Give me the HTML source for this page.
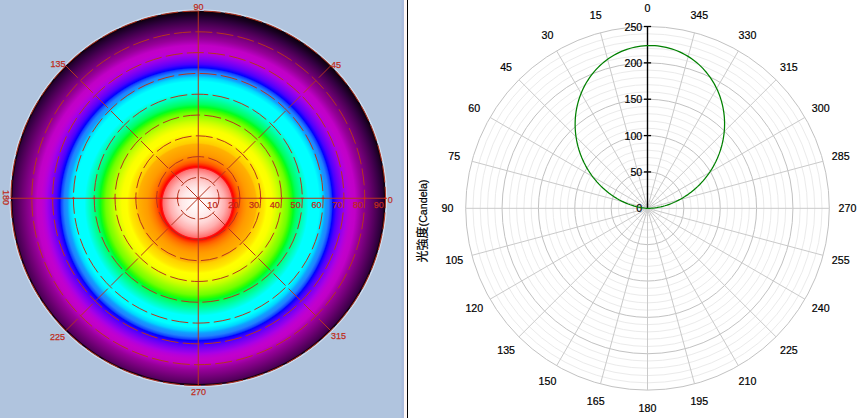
<!DOCTYPE html><html><head><meta charset="utf-8"><title>光強度</title><style>
html,body{margin:0;padding:0;background:#fff}
body{width:866px;height:418px;overflow:hidden}
svg{display:block}
text{font-family:"Liberation Sans","Noto Sans CJK TC",sans-serif}
.l{font-size:9.6px;fill:#bf2c1c;stroke:#bf2c1c;stroke-width:0.25px}
.r{font-size:10.67px;fill:#000;text-anchor:middle;stroke:#000;stroke-width:0.2px}
.s{font-size:10.67px;fill:#000;text-anchor:end;stroke:#000;stroke-width:0.2px}
</style></head><body>
<svg width="866" height="418" viewBox="0 0 866 418">
<defs>
<radialGradient id="g" gradientUnits="userSpaceOnUse" cx="195.8" cy="204.8" fx="197.6" fy="202.8" r="200.0">
<stop offset="0.0000" stop-color="rgb(255,255,255)"/>
<stop offset="0.0400" stop-color="rgb(255,245,245)"/>
<stop offset="0.0750" stop-color="rgb(255,233,233)"/>
<stop offset="0.1050" stop-color="rgb(255,210,210)"/>
<stop offset="0.1380" stop-color="rgb(255,174,174)"/>
<stop offset="0.1600" stop-color="rgb(255,134,134)"/>
<stop offset="0.1720" stop-color="rgb(255,108,108)"/>
<stop offset="0.1760" stop-color="rgb(255,24,24)"/>
<stop offset="0.1825" stop-color="rgb(255,0,0)"/>
<stop offset="0.1910" stop-color="rgb(255,40,0)"/>
<stop offset="0.2040" stop-color="rgb(255,88,0)"/>
<stop offset="0.2200" stop-color="rgb(255,120,0)"/>
<stop offset="0.2350" stop-color="rgb(255,140,0)"/>
<stop offset="0.2500" stop-color="rgb(255,155,0)"/>
<stop offset="0.2950" stop-color="rgb(255,178,0)"/>
<stop offset="0.3025" stop-color="rgb(255,205,0)"/>
<stop offset="0.3350" stop-color="rgb(255,232,0)"/>
<stop offset="0.3500" stop-color="rgb(255,255,0)"/>
<stop offset="0.3750" stop-color="rgb(250,255,0)"/>
<stop offset="0.3950" stop-color="rgb(224,255,0)"/>
<stop offset="0.4100" stop-color="rgb(200,255,0)"/>
<stop offset="0.4350" stop-color="rgb(150,255,0)"/>
<stop offset="0.4550" stop-color="rgb(112,255,0)"/>
<stop offset="0.4700" stop-color="rgb(56,255,0)"/>
<stop offset="0.4835" stop-color="rgb(0,255,32)"/>
<stop offset="0.4980" stop-color="rgb(0,255,96)"/>
<stop offset="0.5170" stop-color="rgb(0,255,144)"/>
<stop offset="0.5350" stop-color="rgb(0,255,190)"/>
<stop offset="0.5515" stop-color="rgb(0,255,230)"/>
<stop offset="0.5600" stop-color="rgb(0,255,255)"/>
<stop offset="0.6125" stop-color="rgb(0,255,255)"/>
<stop offset="0.6325" stop-color="rgb(0,216,255)"/>
<stop offset="0.6450" stop-color="rgb(16,160,255)"/>
<stop offset="0.6615" stop-color="rgb(32,128,255)"/>
<stop offset="0.6760" stop-color="rgb(16,64,255)"/>
<stop offset="0.6825" stop-color="rgb(0,0,255)"/>
<stop offset="0.7000" stop-color="rgb(72,0,255)"/>
<stop offset="0.7135" stop-color="rgb(104,0,248)"/>
<stop offset="0.7300" stop-color="rgb(136,0,240)"/>
<stop offset="0.7480" stop-color="rgb(168,0,230)"/>
<stop offset="0.7600" stop-color="rgb(184,0,215)"/>
<stop offset="0.7750" stop-color="rgb(194,0,204)"/>
<stop offset="0.7950" stop-color="rgb(192,0,198)"/>
<stop offset="0.8100" stop-color="rgb(172,0,178)"/>
<stop offset="0.8280" stop-color="rgb(150,0,152)"/>
<stop offset="0.8500" stop-color="rgb(128,0,132)"/>
<stop offset="0.8715" stop-color="rgb(106,0,112)"/>
<stop offset="0.9000" stop-color="rgb(76,0,86)"/>
<stop offset="0.9235" stop-color="rgb(50,0,64)"/>
<stop offset="0.9500" stop-color="rgb(24,0,32)"/>
<stop offset="0.9750" stop-color="rgb(6,0,10)"/>
</radialGradient>
</defs>
<rect x="0" y="0" width="404" height="418" fill="#b0c4de"/>
<rect x="401.5" y="0" width="2.5" height="418" fill="#a9badb"/>
<rect x="404" y="0" width="3" height="418" fill="#fff7f6"/>
<rect x="407" y="0" width="1" height="418" fill="#000"/>
<circle cx="198.25" cy="198.25" r="187.25" fill="url(#g)"/>
<circle cx="198.25" cy="198.25" r="188.55" fill="none" stroke="#d6e2f0" stroke-width="1"/>
<circle cx="198.25" cy="198.25" r="186.55" fill="none" stroke="#14000c" stroke-width="1.4"/>
<circle cx="198.25" cy="198.25" r="20.81" fill="none" stroke="#b5341f" stroke-width="1" stroke-dasharray="17 4.3" stroke-dashoffset="7"/>
<circle cx="198.25" cy="198.25" r="41.61" fill="none" stroke="#b5341f" stroke-width="1" stroke-dasharray="17 4.3" stroke-dashoffset="7"/>
<circle cx="198.25" cy="198.25" r="62.42" fill="none" stroke="#b5341f" stroke-width="1" stroke-dasharray="17 4.3" stroke-dashoffset="7"/>
<circle cx="198.25" cy="198.25" r="83.22" fill="none" stroke="#b5341f" stroke-width="1" stroke-dasharray="17 4.3" stroke-dashoffset="7"/>
<circle cx="198.25" cy="198.25" r="104.03" fill="none" stroke="#b5341f" stroke-width="1" stroke-dasharray="17 4.3" stroke-dashoffset="7"/>
<circle cx="198.25" cy="198.25" r="124.83" fill="none" stroke="#b5341f" stroke-width="1" stroke-dasharray="17 4.3" stroke-dashoffset="7"/>
<circle cx="198.25" cy="198.25" r="145.64" fill="none" stroke="#b5341f" stroke-width="1" stroke-dasharray="17 4.3" stroke-dashoffset="7"/>
<circle cx="198.25" cy="198.25" r="166.44" fill="none" stroke="#b5341f" stroke-width="1" stroke-dasharray="17 4.3" stroke-dashoffset="7"/>
<circle cx="198.25" cy="198.25" r="187.25" fill="none" stroke="#b5341f" stroke-width="1" stroke-dasharray="17 4.3" stroke-dashoffset="7"/>
<line x1="198.25" y1="198.25" x2="385.50" y2="198.25" stroke="#b5341f" stroke-width="1"/>
<line x1="198.25" y1="198.25" x2="330.66" y2="65.84" stroke="#b5341f" stroke-width="1" stroke-dasharray="17 4.3"/>
<line x1="198.25" y1="198.25" x2="198.25" y2="11.00" stroke="#b5341f" stroke-width="1"/>
<line x1="198.25" y1="198.25" x2="65.84" y2="65.84" stroke="#b5341f" stroke-width="1" stroke-dasharray="17 4.3"/>
<line x1="198.25" y1="198.25" x2="11.00" y2="198.25" stroke="#b5341f" stroke-width="1"/>
<line x1="198.25" y1="198.25" x2="65.84" y2="330.66" stroke="#b5341f" stroke-width="1" stroke-dasharray="17 4.3"/>
<line x1="198.25" y1="198.25" x2="198.25" y2="385.50" stroke="#b5341f" stroke-width="1"/>
<line x1="198.25" y1="198.25" x2="330.66" y2="330.66" stroke="#b5341f" stroke-width="1" stroke-dasharray="17 4.3"/>
<rect x="9.50" y="197.75" width="3" height="1" fill="#e01818"/>
<rect x="30.31" y="197.75" width="3" height="1" fill="#e01818"/>
<rect x="51.11" y="197.75" width="3" height="1" fill="#e01818"/>
<rect x="71.92" y="197.75" width="3" height="1" fill="#e01818"/>
<rect x="92.72" y="197.75" width="3" height="1" fill="#e01818"/>
<rect x="113.53" y="197.75" width="3" height="1" fill="#e01818"/>
<rect x="134.33" y="197.75" width="3" height="1" fill="#e01818"/>
<rect x="155.14" y="197.75" width="3" height="1" fill="#e01818"/>
<rect x="175.94" y="197.75" width="3" height="1" fill="#e01818"/>
<rect x="196.75" y="197.75" width="3" height="1" fill="#e01818"/>
<rect x="217.56" y="197.75" width="3" height="1" fill="#e01818"/>
<rect x="238.36" y="197.75" width="3" height="1" fill="#e01818"/>
<rect x="259.17" y="197.75" width="3" height="1" fill="#e01818"/>
<rect x="279.97" y="197.75" width="3" height="1" fill="#e01818"/>
<rect x="300.78" y="197.75" width="3" height="1" fill="#e01818"/>
<rect x="321.58" y="197.75" width="3" height="1" fill="#e01818"/>
<rect x="342.39" y="197.75" width="3" height="1" fill="#e01818"/>
<rect x="363.19" y="197.75" width="3" height="1" fill="#e01818"/>
<rect x="384.00" y="197.75" width="3" height="1" fill="#e01818"/>
<text class="l" x="207.36" y="207.7" textLength="10.1" lengthAdjust="spacingAndGlyphs">10</text>
<text class="l" x="228.16" y="207.7" textLength="10.1" lengthAdjust="spacingAndGlyphs">20</text>
<text class="l" x="248.97" y="207.7" textLength="10.1" lengthAdjust="spacingAndGlyphs">30</text>
<text class="l" x="269.77" y="207.7" textLength="10.1" lengthAdjust="spacingAndGlyphs">40</text>
<text class="l" x="290.58" y="207.7" textLength="10.1" lengthAdjust="spacingAndGlyphs">50</text>
<text class="l" x="311.38" y="207.7" textLength="10.1" lengthAdjust="spacingAndGlyphs">60</text>
<text class="l" x="332.19" y="207.7" textLength="10.1" lengthAdjust="spacingAndGlyphs">70</text>
<text class="l" x="352.99" y="207.7" textLength="10.1" lengthAdjust="spacingAndGlyphs">80</text>
<text class="l" x="373.80" y="207.7" textLength="10.1" lengthAdjust="spacingAndGlyphs">90</text>
<text class="l" x="193.45" y="10.2" textLength="10.1" lengthAdjust="spacingAndGlyphs">90</text>
<text class="l" x="330.90" y="67.5" textLength="10.1" lengthAdjust="spacingAndGlyphs">45</text>
<text class="l" x="50.40" y="67.3" textLength="15.1" lengthAdjust="spacingAndGlyphs">135</text>
<text class="l" x="49.90" y="339.6" textLength="15.1" lengthAdjust="spacingAndGlyphs">225</text>
<text class="l" x="330.90" y="338.7" textLength="15.1" lengthAdjust="spacingAndGlyphs">315</text>
<text class="l" x="190.93" y="395.4" textLength="15.1" lengthAdjust="spacingAndGlyphs">270</text>
<text class="l" x="387.80" y="202.8" textLength="5.0" lengthAdjust="spacingAndGlyphs">0</text>
<g transform="translate(2.7,189.9) rotate(90)">
<text class="l" x="0.00" y="0" textLength="15.1" lengthAdjust="spacingAndGlyphs">180</text>
</g>
<circle cx="647.5" cy="208.3" r="7.27" fill="none" stroke="#ebebeb" stroke-width="1"/>
<circle cx="647.5" cy="208.3" r="14.54" fill="none" stroke="#ebebeb" stroke-width="1"/>
<circle cx="647.5" cy="208.3" r="21.82" fill="none" stroke="#ebebeb" stroke-width="1"/>
<circle cx="647.5" cy="208.3" r="29.09" fill="none" stroke="#ebebeb" stroke-width="1"/>
<circle cx="647.5" cy="208.3" r="36.36" fill="none" stroke="#c2c2c2" stroke-width="1"/>
<circle cx="647.5" cy="208.3" r="43.63" fill="none" stroke="#ebebeb" stroke-width="1"/>
<circle cx="647.5" cy="208.3" r="50.90" fill="none" stroke="#ebebeb" stroke-width="1"/>
<circle cx="647.5" cy="208.3" r="58.18" fill="none" stroke="#ebebeb" stroke-width="1"/>
<circle cx="647.5" cy="208.3" r="65.45" fill="none" stroke="#ebebeb" stroke-width="1"/>
<circle cx="647.5" cy="208.3" r="72.72" fill="none" stroke="#c2c2c2" stroke-width="1"/>
<circle cx="647.5" cy="208.3" r="79.99" fill="none" stroke="#ebebeb" stroke-width="1"/>
<circle cx="647.5" cy="208.3" r="87.26" fill="none" stroke="#ebebeb" stroke-width="1"/>
<circle cx="647.5" cy="208.3" r="94.54" fill="none" stroke="#ebebeb" stroke-width="1"/>
<circle cx="647.5" cy="208.3" r="101.81" fill="none" stroke="#ebebeb" stroke-width="1"/>
<circle cx="647.5" cy="208.3" r="109.08" fill="none" stroke="#c2c2c2" stroke-width="1"/>
<circle cx="647.5" cy="208.3" r="116.35" fill="none" stroke="#ebebeb" stroke-width="1"/>
<circle cx="647.5" cy="208.3" r="123.62" fill="none" stroke="#ebebeb" stroke-width="1"/>
<circle cx="647.5" cy="208.3" r="130.90" fill="none" stroke="#ebebeb" stroke-width="1"/>
<circle cx="647.5" cy="208.3" r="138.17" fill="none" stroke="#ebebeb" stroke-width="1"/>
<circle cx="647.5" cy="208.3" r="145.44" fill="none" stroke="#c2c2c2" stroke-width="1"/>
<circle cx="647.5" cy="208.3" r="152.71" fill="none" stroke="#ebebeb" stroke-width="1"/>
<circle cx="647.5" cy="208.3" r="159.98" fill="none" stroke="#ebebeb" stroke-width="1"/>
<circle cx="647.5" cy="208.3" r="167.26" fill="none" stroke="#ebebeb" stroke-width="1"/>
<circle cx="647.5" cy="208.3" r="174.53" fill="none" stroke="#ebebeb" stroke-width="1"/>
<circle cx="647.5" cy="208.3" r="181.80" fill="none" stroke="#c2c2c2" stroke-width="1"/>
<line x1="647.5" y1="208.3" x2="647.50" y2="26.50" stroke="#cacaca" stroke-width="1"/>
<text class="r" x="647.5" y="12.1">0</text>
<line x1="647.5" y1="208.3" x2="600.45" y2="32.69" stroke="#cacaca" stroke-width="1"/>
<text class="r" x="595.7" y="18.9">15</text>
<line x1="647.5" y1="208.3" x2="556.60" y2="50.86" stroke="#cacaca" stroke-width="1"/>
<text class="r" x="547.5" y="38.9">30</text>
<line x1="647.5" y1="208.3" x2="518.95" y2="79.75" stroke="#cacaca" stroke-width="1"/>
<text class="r" x="506.1" y="70.7">45</text>
<line x1="647.5" y1="208.3" x2="490.06" y2="117.40" stroke="#cacaca" stroke-width="1"/>
<text class="r" x="474.3" y="112.1">60</text>
<line x1="647.5" y1="208.3" x2="471.89" y2="161.25" stroke="#cacaca" stroke-width="1"/>
<text class="r" x="454.3" y="160.3">75</text>
<line x1="647.5" y1="208.3" x2="465.70" y2="208.30" stroke="#cacaca" stroke-width="1"/>
<text class="r" x="447.5" y="212.1">90</text>
<line x1="647.5" y1="208.3" x2="471.89" y2="255.35" stroke="#cacaca" stroke-width="1"/>
<text class="r" x="454.3" y="263.9">105</text>
<line x1="647.5" y1="208.3" x2="490.06" y2="299.20" stroke="#cacaca" stroke-width="1"/>
<text class="r" x="474.3" y="312.1">120</text>
<line x1="647.5" y1="208.3" x2="518.95" y2="336.85" stroke="#cacaca" stroke-width="1"/>
<text class="r" x="506.1" y="353.5">135</text>
<line x1="647.5" y1="208.3" x2="556.60" y2="365.74" stroke="#cacaca" stroke-width="1"/>
<text class="r" x="547.5" y="385.3">150</text>
<line x1="647.5" y1="208.3" x2="600.45" y2="383.91" stroke="#cacaca" stroke-width="1"/>
<text class="r" x="595.7" y="405.3">165</text>
<line x1="647.5" y1="208.3" x2="647.50" y2="390.10" stroke="#cacaca" stroke-width="1"/>
<text class="r" x="647.5" y="412.1">180</text>
<line x1="647.5" y1="208.3" x2="694.55" y2="383.91" stroke="#cacaca" stroke-width="1"/>
<text class="r" x="699.3" y="405.3">195</text>
<line x1="647.5" y1="208.3" x2="738.40" y2="365.74" stroke="#cacaca" stroke-width="1"/>
<text class="r" x="747.5" y="385.3">210</text>
<line x1="647.5" y1="208.3" x2="776.05" y2="336.85" stroke="#cacaca" stroke-width="1"/>
<text class="r" x="788.9" y="353.5">225</text>
<line x1="647.5" y1="208.3" x2="804.94" y2="299.20" stroke="#cacaca" stroke-width="1"/>
<text class="r" x="820.7" y="312.1">240</text>
<line x1="647.5" y1="208.3" x2="823.11" y2="255.35" stroke="#cacaca" stroke-width="1"/>
<text class="r" x="840.7" y="263.9">255</text>
<line x1="647.5" y1="208.3" x2="829.30" y2="208.30" stroke="#cacaca" stroke-width="1"/>
<text class="r" x="847.5" y="212.1">270</text>
<line x1="647.5" y1="208.3" x2="823.11" y2="161.25" stroke="#cacaca" stroke-width="1"/>
<text class="r" x="840.7" y="160.3">285</text>
<line x1="647.5" y1="208.3" x2="804.94" y2="117.40" stroke="#cacaca" stroke-width="1"/>
<text class="r" x="820.7" y="112.1">300</text>
<line x1="647.5" y1="208.3" x2="776.05" y2="79.75" stroke="#cacaca" stroke-width="1"/>
<text class="r" x="788.9" y="70.7">315</text>
<line x1="647.5" y1="208.3" x2="738.40" y2="50.86" stroke="#cacaca" stroke-width="1"/>
<text class="r" x="747.5" y="38.9">330</text>
<line x1="647.5" y1="208.3" x2="694.55" y2="32.69" stroke="#cacaca" stroke-width="1"/>
<text class="r" x="699.3" y="18.9">345</text>
<line x1="647.5" y1="208.3" x2="647.5" y2="26.0" stroke="#000" stroke-width="1.4"/>
<text class="s" x="642.3" y="212.4">0</text>
<line x1="643.9" y1="171.94" x2="651.1" y2="171.94" stroke="#000" stroke-width="1.3"/>
<text class="s" x="642.3" y="176.0">50</text>
<line x1="643.9" y1="135.58" x2="651.1" y2="135.58" stroke="#000" stroke-width="1.3"/>
<text class="s" x="642.3" y="139.7">100</text>
<line x1="643.9" y1="99.22" x2="651.1" y2="99.22" stroke="#000" stroke-width="1.3"/>
<text class="s" x="642.3" y="103.3">150</text>
<line x1="643.9" y1="62.86" x2="651.1" y2="62.86" stroke="#000" stroke-width="1.3"/>
<text class="s" x="642.3" y="67.0">200</text>
<line x1="643.9" y1="26.50" x2="651.1" y2="26.50" stroke="#000" stroke-width="1.3"/>
<text class="s" x="642.3" y="30.6">250</text>
<polyline points="647.50,208.30 646.55,208.26 645.21,208.16 643.67,207.99 641.99,207.76 640.21,207.46 638.33,207.08 636.39,206.62 634.38,206.08 632.33,205.46 630.24,204.76 628.12,203.97 625.97,203.09 623.81,202.13 621.64,201.08 619.47,199.94 617.30,198.72 615.13,197.41 612.98,196.01 610.86,194.53 608.75,192.96 606.67,191.31 604.63,189.57 602.62,187.75 600.66,185.86 598.74,183.89 596.88,181.84 595.07,179.71 593.32,177.52 591.63,175.26 590.00,172.93 588.45,170.53 586.97,168.08 585.56,165.57 584.23,163.00 582.98,160.38 581.82,157.72 580.74,155.01 579.75,152.25 578.85,149.46 578.05,146.64 577.34,143.78 576.72,140.90 576.21,137.99 575.79,135.07 575.47,132.13 575.25,129.18 575.14,126.22 575.13,123.26 575.22,120.30 575.41,117.35 575.71,114.41 576.11,111.47 576.62,108.56 577.23,105.67 577.94,102.80 578.75,99.97 579.66,97.17 580.68,94.40 581.79,91.68 583.00,89.00 584.30,86.38 585.70,83.80 587.19,81.29 588.77,78.83 590.44,76.44 592.19,74.11 594.03,71.86 595.95,69.68 597.94,67.58 600.02,65.56 602.16,63.62 604.37,61.77 606.65,60.00 608.99,58.33 611.40,56.75 613.85,55.27 616.37,53.89 618.92,52.61 621.53,51.42 624.18,50.35 626.86,49.38 629.58,48.51 632.32,47.76 635.10,47.11 637.89,46.57 640.70,46.15 643.53,45.83 646.36,45.63 649.20,45.54 652.05,45.56 654.88,45.70 657.71,45.95 660.53,46.31 663.34,46.78 666.12,47.36 668.88,48.05 671.61,48.85 674.31,49.76 676.98,50.78 679.61,51.90 682.19,53.12 684.72,54.44 687.21,55.87 689.64,57.39 692.01,59.01 694.32,60.71 696.56,62.51 698.74,64.40 700.85,66.38 702.88,68.43 704.83,70.56 706.71,72.77 708.50,75.06 710.21,77.41 711.83,79.83 713.37,82.31 714.81,84.85 716.15,87.45 717.41,90.09 718.56,92.79 719.62,95.53 720.58,98.31 721.43,101.13 722.19,103.98 722.84,106.85 723.39,109.75 723.84,112.67 724.18,115.61 724.42,118.56 724.55,121.52 724.58,124.48 724.51,127.44 724.33,130.39 724.05,133.34 723.67,136.27 723.19,139.19 722.61,142.08 721.93,144.96 721.15,147.80 720.29,150.61 719.32,153.39 718.27,156.12 717.13,158.82 715.90,161.46 714.59,164.06 713.20,166.61 711.73,169.09 710.19,171.52 708.57,173.89 706.88,176.19 705.13,178.43 703.32,180.59 701.45,182.68 699.52,184.70 697.54,186.64 695.52,188.51 693.45,190.29 691.35,191.99 689.21,193.61 687.05,195.14 684.86,196.59 682.65,197.96 680.42,199.23 678.19,200.42 675.96,201.52 673.72,202.53 671.50,203.46 669.29,204.30 667.09,205.06 664.93,205.73 662.80,206.31 660.72,206.82 658.69,207.24 656.72,207.59 654.83,207.86 653.03,208.07 651.34,208.21 649.80,208.28 648.45,208.31 647.50,208.30" fill="none" stroke="#008000" stroke-width="1.25" stroke-linejoin="round"/>
<text transform="translate(427,262.4) rotate(-90)" x="0" y="0" style="font-size:10.67px;fill:#000;stroke:#000;stroke-width:0.2px"><tspan style="font-size:12px">光強度</tspan>(Candela)</text>
</svg></body></html>
